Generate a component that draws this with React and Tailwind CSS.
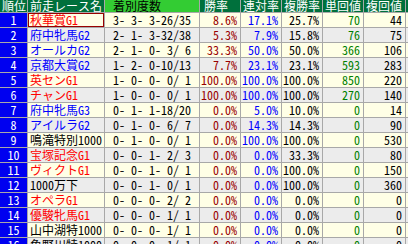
import React from "react";

const headers = [
  { label: "順位", cls: "bg-[#00703c] text-white pl-[2px]" },
  { label: "前走レース名", cls: "bg-[#00703c] text-white pl-[2px]" },
  { label: "着別度数", cls: "bg-[#33cc33] text-black pl-[8px]" },
  { label: "勝率", cls: "bg-[#00703c] text-white pl-[4px]" },
  { label: "連対率", cls: "bg-[#00703c] text-white pl-[2px]" },
  { label: "複勝率", cls: "bg-[#00703c] text-white pl-[2px]" },
  { label: "単回値", cls: "bg-[#00703c] text-white pl-[2px]" },
  { label: "複回値", cls: "bg-[#00703c] text-white pl-[2px]" },
  { label: "", cls: "bg-[#00703c] text-white pl-[2px]" },
];

// grade: r = G1 (red), b = G2/G3 (blue), k = other (black)
const rows = [
  ["秋華賞G1", "r", "3- 3- 3-26/35", "8.6%", "17.1%", "25.7%", "70", "44"],
  ["府中牝馬G2", "b", "2- 1- 3-32/38", "5.3%", "7.9%", "15.8%", "76", "75"],
  ["オールカG2", "b", "2- 1- 0- 3/ 6", "33.3%", "50.0%", "50.0%", "366", "106"],
  ["京都大賞G2", "b", "1- 2- 0-10/13", "7.7%", "23.1%", "23.1%", "593", "283"],
  ["英センG1", "r", "1- 0- 0- 0/ 1", "100.0%", "100.0%", "100.0%", "850", "220"],
  ["チャンG1", "r", "1- 0- 0- 0/ 1", "100.0%", "100.0%", "100.0%", "270", "140"],
  ["府中牝馬G3", "b", "0- 1- 1-18/20", "0.0%", "5.0%", "10.0%", "0", "14"],
  ["アイルラG2", "b", "0- 1- 0- 6/ 7", "0.0%", "14.3%", "14.3%", "0", "90"],
  ["鳴滝特別1000", "k", "0- 1- 0- 0/ 1", "0.0%", "100.0%", "100.0%", "0", "530"],
  ["宝塚記念G1", "r", "0- 0- 1- 2/ 3", "0.0%", "0.0%", "33.3%", "0", "80"],
  ["ヴィクトG1", "r", "0- 0- 1- 0/ 1", "0.0%", "0.0%", "100.0%", "0", "150"],
  ["1000万下", "k", "0- 0- 1- 0/ 1", "0.0%", "0.0%", "100.0%", "0", "360"],
  ["オペラG1", "r", "0- 0- 0- 2/ 2", "0.0%", "0.0%", "0.0%", "0", "0"],
  ["優駿牝馬G1", "r", "0- 0- 0- 1/ 1", "0.0%", "0.0%", "0.0%", "0", "0"],
  ["山中湖特1000", "k", "0- 0- 0- 1/ 1", "0.0%", "0.0%", "0.0%", "0", "0"],
  ["魚野川特1000", "k", "0- 0- 0- 1/ 1", "0.0%", "0.0%", "0.0%", "0", "0"],
];

const nameColor = { r: "text-[#ff0000]", b: "text-[#0000ff]", k: "text-black" };

export default function App() {
  return (
    <div
      className="w-[408px] h-[244px] overflow-hidden bg-white text-[12px] leading-[14px]"
      style={{ fontFamily: '"Noto Sans Mono CJK JP", "Noto Sans CJK JP", "DejaVu Sans Mono", monospace' }}
    >
      <div className="grid w-max grid-cols-[27px_76px_94px_40px_40px_40px_40px_41px_40px] gap-px bg-[#a8a8a8]">
        {headers.map((h, i) => (
          <div key={i} className={`h-[12px] leading-[12px] whitespace-nowrap ${h.cls}`}>
            {h.label}
          </div>
        ))}
        {rows.map((r, i) => {
          const bg = i % 2 === 0 ? "bg-[#ffffe6]" : "bg-[#ececec]";
          return (
            <React.Fragment key={i}>
              <div className="h-[14px] bg-[#0000f0] text-white text-center">{i + 1}</div>
              <div
                className={`h-[14px] whitespace-nowrap ${bg} ${nameColor[r[1]]} ${
                  i === 0 ? "border border-[#990000] pl-[1px] leading-[12px]" : "pl-[2px]"
                }`}
              >
                {r[0]}
              </div>
              <div className={`h-[14px] whitespace-pre text-center text-black ${bg}`}>{r[2]}</div>
              <div className={`h-[14px] text-right pr-[3px] text-[#990000] ${bg}`}>{r[3]}</div>
              <div className={`h-[14px] text-right pr-[3px] text-[#0000ff] ${bg}`}>{r[4]}</div>
              <div className={`h-[14px] text-right pr-[3px] text-black ${bg}`}>{r[5]}</div>
              <div className={`h-[14px] text-right pr-[3px] text-[#008000] ${bg}`}>{r[6]}</div>
              <div className={`h-[14px] text-right pr-[3px] text-black ${bg}`}>{r[7]}</div>
              <div className={`h-[14px] ${bg}`}></div>
            </React.Fragment>
          );
        })}
      </div>
    </div>
  );
}
